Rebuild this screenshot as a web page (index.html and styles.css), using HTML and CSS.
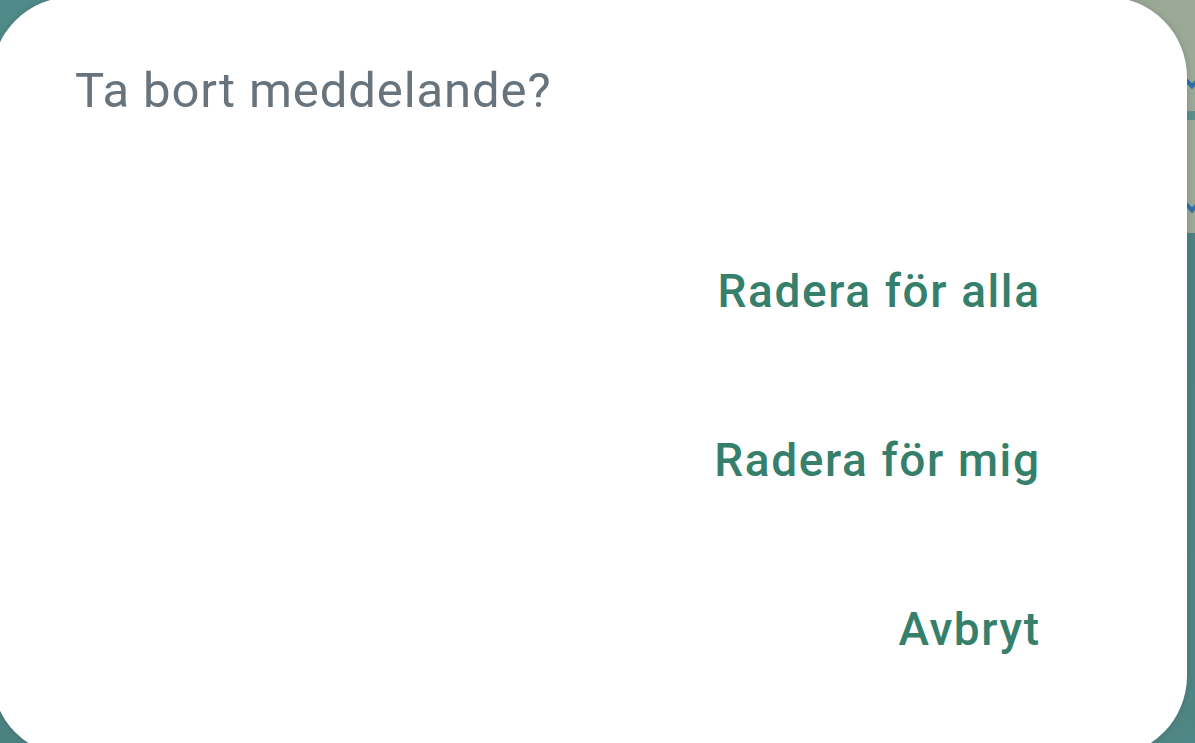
FILE: index.html
```html
<!DOCTYPE html>
<html lang="sv">
<head>
    <meta charset="UTF-8" />
    <meta name="viewport" content="width=device-width, initial-scale=1.0" />
    <title>Ta bort meddelande?</title>
    <link rel="stylesheet" href="styles.css">
</head>
<body>
<!-- Innehåll bakom dialogen -->
<div class="app">
    <div class="app-header">
        <span class="chevron chevron-top"></span>
        <span class="strip"></span>
        <span class="chevron chevron-bottom"></span>
    </div>
</div>

<!-- Dialog -->
<div class="dialog">
    <h2 class="dialog-title">Ta bort meddelande?</h2>
    <div class="dialog-actions">
        <button class="action">Radera för alla</button>
        <button class="action">Radera för mig</button>
        <button class="action">Avbryt</button>
    </div>
</div>
</body>
</html>
```

FILE: styles.css
```css
body {
    margin: 0;
    height: 743px;
    overflow: hidden;
    font-family: Roboto, "Noto Sans", sans-serif;
    background: linear-gradient(160deg, #4f8b89 0%, #4b8280 60%, #4f8584 100%);
    position: relative;
}

.app {
    display: flex;
    justify-content: flex-end;
}

.app-header {
    width: 100px;
    height: 233px;
    background-color: #9ba896;
    position: relative;
}

.strip {
    position: absolute;
    right: 0;
    top: 111px;
    width: 20px;
    height: 9px;
    background-color: #5c8f8c;
}

.chevron {
    position: absolute;
    right: -4px;
    width: 10px;
    height: 10px;
    border-right: 4px solid #2f6fa8;
    border-bottom: 4px solid #2f6fa8;
    transform: rotate(45deg);
}

.chevron-top {
    top: 72px;
}

.chevron-bottom {
    top: 196px;
}

/* Dialogruta */
.dialog {
    position: absolute;
    left: -8px;
    top: -3px;
    width: 1195px;
    height: 759px;
    box-sizing: border-box;
    padding: 65px 148px 0 83px;
    background-color: #fff;
    border-radius: 80px;
    box-shadow: 0 0 6px rgba(0, 0, 0, 0.15);
}

.dialog-title {
    margin: 0;
    font-size: 49px;
    font-weight: 400;
    letter-spacing: 0.9px;
    line-height: 1.2;
    color: #67737d;
}

.dialog-actions {
    display: flex;
    flex-direction: column;
    align-items: flex-end;
    margin-top: 86px;
}

.action {
    background: none;
    border: none;
    padding: 0;
    font-family: Roboto, "Noto Sans", sans-serif;
    font-size: 46px;
    font-weight: 500;
    letter-spacing: 1.6px;
    line-height: 55px;
    height: 169px;
    margin-right: -1.6px;
    color: #367f6b;
    cursor: pointer;
}
```
